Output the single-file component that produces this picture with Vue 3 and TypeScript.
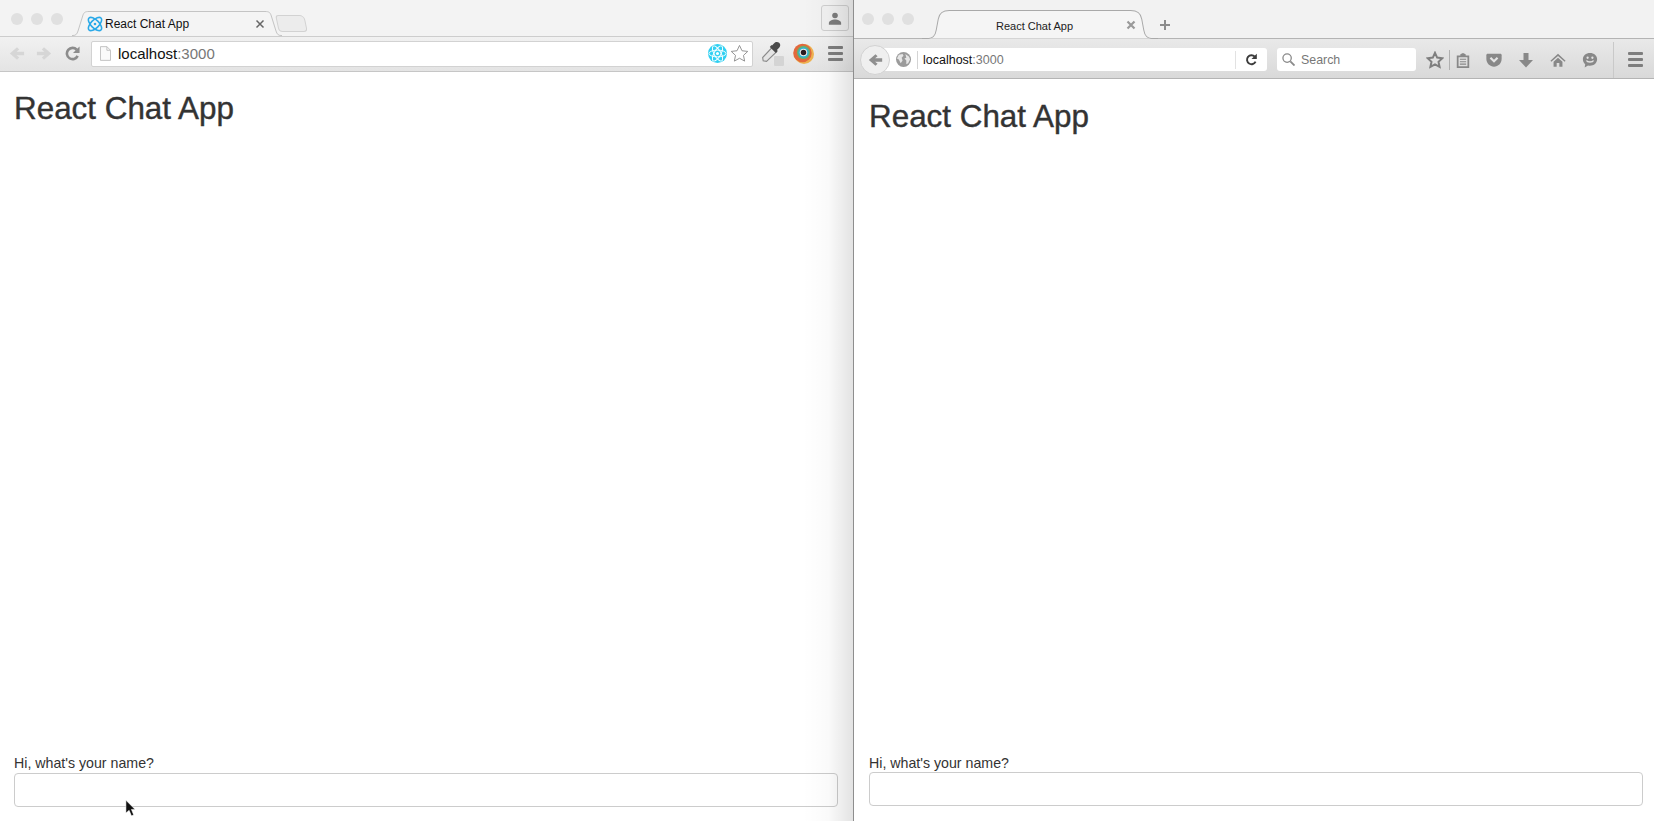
<script setup lang="ts">
const appTitle = 'React Chat App'
const prompt = "Hi, what's your name?"
</script>

<template>
  <div class="screen">
    <section class="window chrome">
      <header class="titlebar">
        <div class="dots"><i></i><i></i><i></i></div>
        <div class="tab">
          <svg class="tab-shape" viewBox="0 0 210 25" preserveAspectRatio="none">
            <path d="M0 24.5H1C4 24.5 5 23 6 20L11 4C12 1.500 13 .5 17 .5H193C197 .5 198 1.500 199 4L204 20C205 23 206 24.500 209 24.500H210" fill="#f4f4f4" stroke="#c4c4c4" />
          </svg>
          <svg class="favicon" viewBox="0 0 18 18" fill="none" stroke="#2aa9e8" stroke-width="1.800">
            <ellipse cx="9" cy="9" rx="9.500" ry="4.500" transform="rotate(45 9 9)" />
            <ellipse cx="9" cy="9" rx="9.500" ry="4.500" transform="rotate(-45 9 9)" />
            <circle cx="9" cy="9" r="1.500" fill="#2aa9e8" stroke="none" />
          </svg>
          <span class="tab-title">{{ appTitle }}</span>
          <svg class="tab-close" viewBox="0 0 10 10" stroke="#666" stroke-width="1.500"><path d="M1.500 1.500l7 7M8.500 1.500l-7 7" /></svg>
        </div>
        <div class="new-tab"></div>
        <div class="profile">
          <svg viewBox="0 0 16 14" fill="#7d7d7d"><circle cx="8" cy="3.500" r="3.200" /><path d="M1 14v-2c0-2.500 4-4 7-4s7 1.500 7 4v2z" /></svg>
        </div>
      </header>
      <div class="toolbar">
        <svg class="nav faded" viewBox="0 0 18 16" fill="#d6d6d6"><path d="M9 1L1 8l8 7 2.500-2.500L8.500 10H17V6H8.500l3-2.500z" /></svg>
        <svg class="nav faded" viewBox="0 0 18 16" fill="#d6d6d6"><path d="M9 1l8 7-8 7-2.500-2.500L9.500 10H1V6h8.500l-3-2.500z" /></svg>
        <svg class="nav" viewBox="0 0 16 16" fill="none" stroke="#8c8c8c" stroke-width="2.800"><path d="M13.500 10.500A6 6 0 1 1 12.500 4" /><path d="M15.500 0.500v7h-7z" fill="#8c8c8c" stroke="none" /></svg>
        <div class="omnibox">
          <svg class="doc" viewBox="0 0 12 16" fill="#fafafa" stroke="#bdbdbd"><path d="M.5.500h7l4 4v11H.500z" /><path d="M7.500.500v4h4" fill="none" /></svg>
          <span class="url">localhost<em>:3000</em></span>
          <svg class="react-ext" viewBox="0 0 20 20">
            <circle cx="10" cy="10" r="10" fill="#30d0f2" />
            <g fill="none" stroke="#fff" stroke-width="1">
              <ellipse cx="10" cy="10" rx="9" ry="3.500" />
              <ellipse cx="10" cy="10" rx="9" ry="3.500" transform="rotate(60 10 10)" />
              <ellipse cx="10" cy="10" rx="9" ry="3.500" transform="rotate(120 10 10)" />
            </g>
            <circle cx="10" cy="10" r="1.600" fill="#fff" />
          </svg>
          <svg class="star" viewBox="0 0 20 20" fill="#fff" stroke="#8f8f8f"><path d="M10 1.500l2.600 5.600 6.100.7-4.500 4.200 1.200 6L10 15l-5.400 3 1.200-6L1.300 7.800l6.100-.7z" /></svg>
        </div>
        <div class="dropper">
          <svg viewBox="0 0 20 20"><path d="M2 18l-.5-3L10 6l4 4-9 8.500z" fill="#e4e4e4" stroke="#8a8a8a" /><path d="M10 4l2-2c1-1.200 3-1.600 4.500-.3s1.200 3.300 0 4.500l-2 2 .8 1-1.800 1.800-5.500-5.500L9.500 3.700z" fill="#4b4b4b" /></svg>
          <i></i>
        </div>
        <svg class="rainbow" viewBox="0 0 20 20">
          <circle cx="10.500" cy="10.500" r="9.500" fill="#eeb24f" />
          <circle cx="9" cy="9.500" r="8.800" fill="#e2683c" />
          <circle cx="10" cy="9" r="6.300" fill="#6cae6a" />
          <circle cx="10" cy="9" r="5" fill="#31b2d8" />
          <circle cx="10" cy="9" r="3.600" fill="#f2efe6" />
          <circle cx="10" cy="9" r="2.600" fill="#2a1b20" />
        </svg>
        <div class="burger"><i></i><i></i><i></i></div>
      </div>
      <main class="page">
        <h1>{{ appTitle }}</h1>
        <form class="name-form" @submit.prevent>
          <label>{{ prompt }}</label>
          <input type="text" />
        </form>
      </main>
      <div class="edge-shade"></div>
      <svg class="cursor" viewBox="0 0 12 18"><path d="M1 0v14l3.500-3 2.500 6 2.500-1-2.500-6H11z" fill="#111" stroke="#fff" stroke-width=".6" /></svg>
    </section>

    <section class="window firefox">
      <header class="titlebar">
        <div class="dots"><i></i><i></i><i></i></div>
        <div class="tab">
          <svg class="tab-shape" viewBox="0 0 232 29" preserveAspectRatio="none">
            <path d="M0 28.500H4C11 28.500 13 26 14 20L16 9C17 3 20 .5 27 .5H205C212 .5 215 3 216 9L218 20C219 26 221 28.500 228 28.500H232" fill="#f5f5f5" stroke="#a9a9a9" />
          </svg>
          <span class="tab-title">{{ appTitle }}</span>
          <svg class="tab-close" viewBox="0 0 10 10" stroke="#9a9a9a" stroke-width="2.200"><path d="M1.500 1.500l7 7M8.500 1.500l-7 7" /></svg>
        </div>
        <svg class="plus" viewBox="0 0 12 12" stroke="#8c8c8c" stroke-width="2"><path d="M6 1v10M1 6h10" /></svg>
      </header>
      <div class="toolbar">
        <div class="back">
          <svg viewBox="0 0 18 16" fill="#8f8f8f"><path d="M9 1L1 8l8 7 2.500-2.500L8.500 10H17V6H8.500l3-2.500z" /></svg>
        </div>
        <div class="urlbar">
          <svg class="globe" viewBox="0 0 16 16"><circle cx="8" cy="8" r="8" fill="#9b9b9b" /><path d="M3 3l4-1 1 2-2 2 1 3-2 3-2-4-2-1zM10 2l4 3 1 3-2 4-2 1 0-4-2-2 2-1z" fill="#e6e6e6" /></svg>
          <span class="url">localhost<em>:3000</em></span>
          <b class="url-sep"></b>
          <svg class="reload" viewBox="0 0 16 16" fill="none" stroke="#3c3c3c" stroke-width="2.400"><path d="M13 10.500A5.500 5.500 0 1 1 12 4.500" /><path d="M14.500 1v6.500H8z" fill="#3c3c3c" stroke="none" /></svg>
        </div>
        <div class="search">
          <svg viewBox="0 0 14 14" fill="none" stroke="#8a8a8a" stroke-width="1.400"><circle cx="5.500" cy="5.500" r="4.500" /><path d="M9 9l4.500 4.500" stroke-width="2" /></svg>
          <span>Search</span>
        </div>
        <div class="ff-icons">
          <svg class="ff-star" viewBox="0 0 20 20" fill="none" stroke="#7f7f7f" stroke-width="2.200"><path d="M10 2l2.400 5.300 5.800.7-4.300 4 1.200 5.700L10 14.900l-5.100 2.800L6.100 12 1.800 8l5.800-.7z" /></svg>
          <b class="rule"></b>
          <svg class="ff-clip" viewBox="0 0 16 18" fill="#888"><path d="M1 4h4V2.500L8 1l3 1.500V4h4v14H1zM3 6v10h10V6zM4.500 7.500h7v1.300h-7zM4.500 10.300h7v1.300h-7zM4.500 13h7v1.300h-7z" fill-rule="evenodd" /></svg>
          <svg viewBox="0 0 18 16" fill="#888"><path d="M2 1h14c1 0 1.600.6 1.600 1.600V7c0 5-4 8.500-8.600 8.500S.4 12 .4 7V2.600C.4 1.600 1 1 2 1z" /><path d="M5 5.500L9 9.500l4-4" fill="none" stroke="#e4e4e4" stroke-width="2.400" /></svg>
          <svg viewBox="0 0 16 16" fill="#888"><path d="M5.500 1h5v7H15l-7 7.500L1 8h4.500z" /></svg>
          <svg viewBox="0 0 18 16" fill="#888"><path d="M9 1l8.500 7.800-1 1.200L9 3.500 1.500 10l-1-1.200zM9 5.500l5 4.500v5.500h-3.500v-4h-3v4H4V10z" /></svg>
          <svg viewBox="0 0 18 18" fill="#888"><path d="M9 1c4.500 0 8 3 8 7.200S13.500 15.500 9 15.500c-.8 0-1.500 0-2.200-.2L3 17.500l.6-3.600C2 12.600 1 10.500 1 8.200 1 4 4.500 1 9 1z" /><circle cx="6.300" cy="6.500" r="1.300" fill="#e4e4e4" /><circle cx="11.700" cy="6.500" r="1.300" fill="#e4e4e4" /><path d="M5 9.500c1 2.300 7 2.300 8 0" fill="none" stroke="#e4e4e4" stroke-width="1.500" /></svg>
        </div>
        <b class="rule tall"></b>
        <div class="burger"><i></i><i></i><i></i></div>
      </div>
      <main class="page">
        <h1>{{ appTitle }}</h1>
        <form class="name-form" @submit.prevent>
          <label>{{ prompt }}</label>
          <input type="text" />
        </form>
      </main>
    </section>
  </div>
</template>

<style>
html,
body {
  margin: 0;
  overflow: hidden;
  background: #fff;
}
</style>

<style scoped>
.screen {
  display: flex;
  width: 1654px;
  height: 821px;
  overflow: hidden;
  font-family: "Liberation Sans", Arial, sans-serif;
  color: #333;
}

.window {
  position: relative;
  display: flex;
  flex-direction: column;
  height: 100%;
}

.chrome {
  width: 853px;
}

.firefox {
  flex: 1;
  min-width: 0;
  border-left: 1px solid #8e8e8e;
}

.titlebar {
  display: flex;
  align-items: flex-end;
  flex-shrink: 0;
  background: #f3f3f3;
}

.dots {
  display: flex;
  gap: 8px;
  align-self: flex-start;
  margin-top: 13px;
  margin-left: 11px;
}

.dots i {
  width: 12px;
  height: 12px;
  border-radius: 50%;
  background: #e0e0e0;
}

.tab {
  position: relative;
  display: flex;
  align-items: center;
}

.tab-shape {
  position: absolute;
  inset: 0;
  width: 100%;
  height: 100%;
}

.tab-title,
.favicon,
.tab-close {
  position: relative;
}

.tab-close {
  width: 10px;
  height: 10px;
}

/* chrome window */
.chrome .titlebar {
  height: 36px;
}

.chrome .tab {
  width: 210px;
  height: 25px;
  margin-left: 9px;
}

.favicon {
  width: 16px;
  height: 16px;
  margin-left: 15px;
}

.chrome .tab-title {
  margin-left: 2px;
  font-size: 12px;
  color: #111;
}

.chrome .tab-close {
  margin-left: auto;
  margin-right: 17px;
}

.new-tab {
  width: 27px;
  height: 15px;
  margin-left: -5px;
  margin-bottom: 4px;
  border: 1px solid #d2d2d2;
  border-radius: 3px 5px 4px 4px;
  background: #ececec;
  transform: skewX(12deg);
}

.profile {
  display: flex;
  align-items: center;
  justify-content: center;
  width: 26px;
  height: 24px;
  margin-left: auto;
  margin-right: 4px;
  margin-bottom: 5px;
  border: 1px solid #cfcfcf;
  border-radius: 3px;
  background: #f1f1f1;
}

.profile svg {
  width: 14px;
  height: 13px;
}

.toolbar {
  display: flex;
  align-items: center;
  flex-shrink: 0;
}

.chrome .toolbar {
  height: 36px;
  padding-left: 9px;
  padding-bottom: 1px;
  border-top: 1px solid #cdcdcd;
  border-bottom: 1px solid #c6c6c6;
  box-sizing: border-box;
  background: linear-gradient(#f1f1f1, #e4e4e4);
}

.nav {
  width: 16px;
  height: 15px;
  margin-right: 11px;
}

.nav:nth-of-type(3) {
  width: 15px;
  margin-left: 2px;
  margin-right: 11px;
}

.omnibox {
  display: flex;
  align-items: center;
  box-sizing: border-box;
  width: 662px;
  height: 26px;
  padding: 0 3px 0 8px;
  border: 1px solid #d2d2d2;
  border-radius: 2px;
  background: #fff;
}

.doc {
  width: 11px;
  height: 15px;
}

.chrome .url {
  margin-left: 7px;
  font-size: 15px;
  color: #111;
}

.url em {
  font-style: normal;
  color: #777;
}

.react-ext {
  width: 19px;
  height: 19px;
  margin-left: auto;
}

.star {
  width: 19px;
  height: 19px;
  margin-left: 3px;
}

.dropper {
  position: relative;
  width: 23px;
  height: 25px;
  margin-left: 8px;
}

.dropper svg {
  width: 22px;
  height: 22px;
}

.dropper i {
  position: absolute;
  right: 0;
  bottom: 0;
  width: 10px;
  height: 10px;
  background: #d4d4d4;
  border-radius: 1px;
}

.rainbow {
  width: 21px;
  height: 21px;
  margin-left: 9px;
}

.burger {
  display: flex;
  flex-direction: column;
  gap: 3px;
  width: 15px;
}

.burger i {
  height: 3px;
  background: #7e7e7e;
  border-radius: 1px;
}

.chrome .burger {
  margin-left: 14px;
}

.page {
  display: flex;
  flex: 1;
  flex-direction: column;
  justify-content: space-between;
  min-height: 0;
  background: #fff;
}

h1 {
  margin: 0;
  font-size: 31.400px;
  font-weight: 400;
  line-height: 36px;
  color: #333;
  -webkit-text-stroke: 0.4px #333;
}

.chrome h1 {
  margin-top: 19px;
  margin-left: 14px;
}

.name-form {
  display: flex;
  flex-direction: column;
}

.name-form label {
  font-size: 14.200px;
  line-height: 16px;
  color: #333;
}

.name-form input {
  box-sizing: border-box;
  height: 34px;
  margin-top: 2px;
  padding: 6px 12px;
  border: 1px solid #ccc;
  border-radius: 4px;
  background: #fff;
}

.chrome .name-form {
  margin: 0 15px 14px 14px;
}

.edge-shade {
  position: absolute;
  top: 0;
  right: 0;
  bottom: 0;
  width: 50px;
  background: linear-gradient(to right, rgba(0, 0, 0, 0), rgba(0, 0, 0, 0.02) 50%, rgba(0, 0, 0, 0.11));
  pointer-events: none;
}

.cursor {
  position: absolute;
  left: 125px;
  top: 800px;
  width: 11px;
  height: 17px;
}

/* firefox window */
.firefox .titlebar {
  height: 39px;
  border-bottom: 1px solid #b4b4b4;
  box-sizing: border-box;
  background: #f2f2f2;
}

.firefox .dots {
  margin-left: 8px;
}

.firefox .tab {
  width: 236px;
  height: 29px;
  margin-left: 8px;
  margin-bottom: -1px;
}

.firefox .tab-title {
  margin-left: 74px;
  top: 1px;
  font-size: 11px;
  color: #222;
}

.firefox .tab-close {
  margin-left: auto;
  margin-right: 22px;
}

.plus {
  width: 12px;
  height: 12px;
  margin-bottom: 7px;
  margin-left: 1px;
}

.firefox .toolbar {
  position: relative;
  height: 40px;
  padding-top: 2px;
  padding-left: 6px;
  box-sizing: border-box;
  border-bottom: 1px solid #b4b4b4;
  background: linear-gradient(#e9e9e9, #d9d9d9);
}

.back {
  position: relative;
  z-index: 1;
  display: flex;
  align-items: center;
  justify-content: center;
  box-sizing: border-box;
  width: 30px;
  height: 30px;
  border: 1px solid #d2d2d2;
  border-radius: 50%;
  background: #efefef;
}

.back svg {
  width: 15px;
  height: 14px;
}

.urlbar {
  display: flex;
  align-items: center;
  box-sizing: border-box;
  width: 386px;
  height: 23px;
  margin-left: -9px;
  padding-left: 15px;
  border-radius: 0 3px 3px 0;
  background: #fff;
}

.globe {
  width: 15px;
  height: 15px;
}

.firefox .url {
  margin-left: 6px;
  padding-left: 5px;
  border-left: 1px solid #d4d4d4;
  font-size: 12.500px;
  line-height: 18px;
  color: #111;
}

.url-sep {
  width: 1px;
  height: 18px;
  margin-left: auto;
  margin-right: 9px;
  background: #e2e2e2;
}

.reload {
  width: 13px;
  height: 13px;
  margin-right: 9px;
}

.search {
  display: flex;
  align-items: center;
  box-sizing: border-box;
  width: 139px;
  height: 23px;
  margin-left: 10px;
  padding-left: 5px;
  border-radius: 3px;
  background: #fff;
  font-size: 12.400px;
  color: #777;
}

.search svg {
  width: 13px;
  height: 13px;
  margin-right: 6px;
}

.ff-icons {
  display: flex;
  align-items: center;
  margin-left: 10px;
}

.ff-icons svg {
  width: 16px;
  height: 16px;
  margin-right: 16px;
}

.ff-icons .ff-star {
  width: 18px;
  height: 18px;
  margin-right: 5px;
}

.ff-icons .ff-clip {
  margin-right: 15px;
}

.rule {
  display: block;
  width: 1px;
  height: 20px;
  margin-right: 5px;
  background: #b0b0b0;
}

.rule.tall {
  height: 36px;
  margin-left: -1px;
  margin-right: 14px;
  background: #c9c9c9;
}

.firefox .burger {
  width: 15px;
}

.firefox h1 {
  margin-top: 20px;
  margin-left: 15px;
}

.firefox .name-form {
  margin: 0 11px 15px 15px;
}

.firefox .name-form input {
  margin-top: 1px;
}
</style>
